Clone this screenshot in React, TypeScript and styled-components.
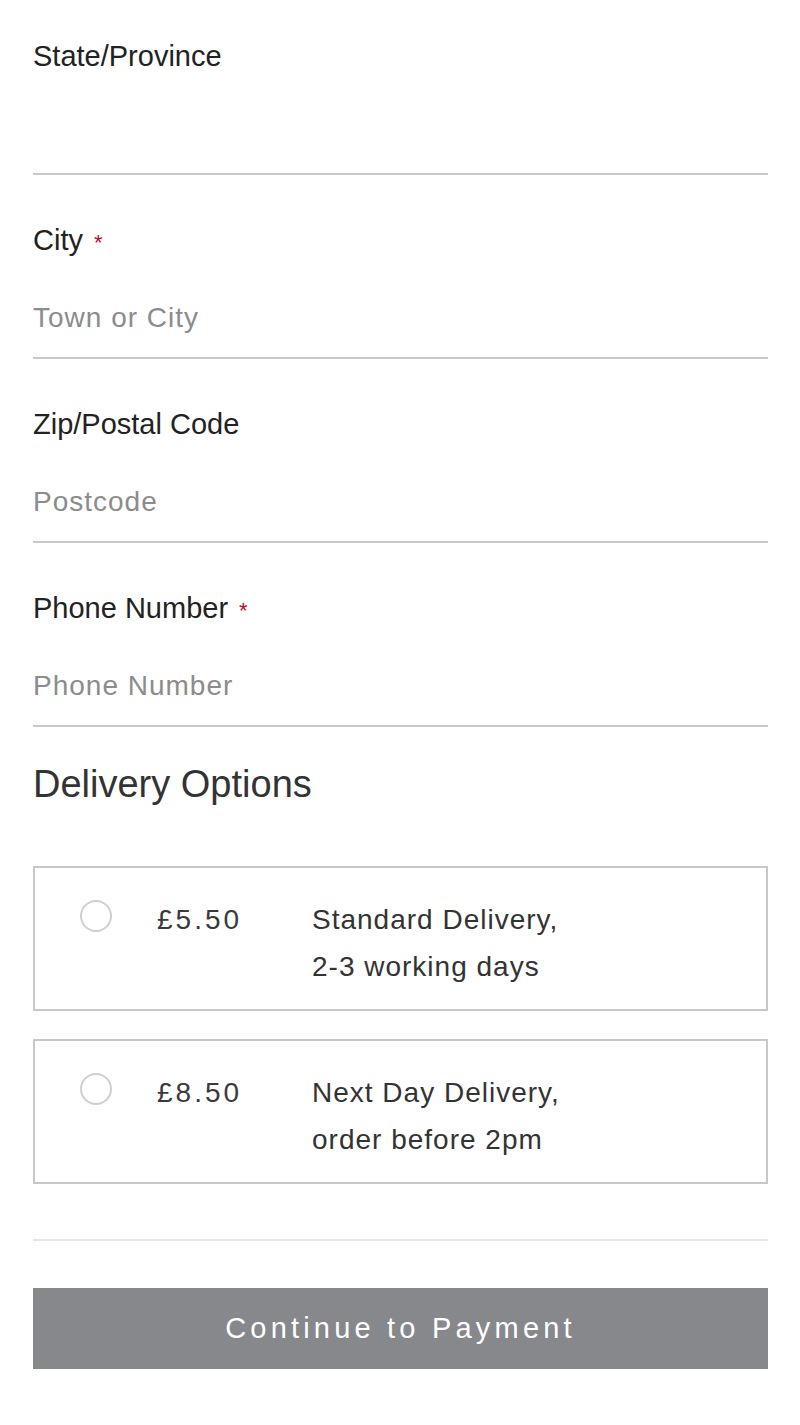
import styled, { createGlobalStyle } from 'styled-components'

const GlobalStyle = createGlobalStyle`
  html, body {
    margin: 0;
    padding: 0;
    background: #fff;
  }
  body {
    font-family: 'Liberation Sans', Arial, sans-serif;
    -webkit-font-smoothing: antialiased;
  }
  * {
    box-sizing: border-box;
  }
`

const fields = [
  { id: 'state', label: 'State/Province', placeholder: '', required: false },
  { id: 'city', label: 'City', placeholder: 'Town or City', required: true },
  { id: 'zip', label: 'Zip/Postal Code', placeholder: 'Postcode', required: false },
  { id: 'phone', label: 'Phone Number', placeholder: 'Phone Number', required: true },
]

const options = [
  { id: 'standard', price: '£5.50', lines: ['Standard Delivery,', '2-3 working days'] },
  { id: 'nextday', price: '£8.50', lines: ['Next Day Delivery,', 'order before 2pm'] },
]

export default function App() {
  return (
    <Page>
      <GlobalStyle />
      <Form>
        {fields.map((f) => (
          <Field key={f.id}>
            <Label htmlFor={f.id}>
              {f.label}
              {f.required && <Required>*</Required>}
            </Label>
            <Input id={f.id} placeholder={f.placeholder} />
          </Field>
        ))}
      </Form>

      <Heading>Delivery Options</Heading>

      <Options>
        {options.map((o) => (
          <Option key={o.id}>
            <Radio type="radio" name="delivery" value={o.id} />
            <Price>{o.price}</Price>
            <Description>
              {o.lines.map((l) => (
                <div key={l}>{l}</div>
              ))}
            </Description>
          </Option>
        ))}
      </Options>

      <Divider />

      <ContinueButton type="button">Continue to Payment</ContinueButton>
    </Page>
  )
}

const Page = styled.div`
  width: 800px;
  min-height: 1425px;
  padding: 40px 32px 0 33px;
`

const Form = styled.div`
  display: flex;
  flex-direction: column;
  gap: 49px;
`

const Field = styled.div`
  display: flex;
  flex-direction: column;
`

const Label = styled.label`
  display: block;
  height: 32px;
  font-size: 29px;
  line-height: 32px;
  color: #222;
  margin-bottom: 30px;
`

const Required = styled.span`
  color: #d0021b;
  font-size: 22px;
  line-height: 0;
  margin-left: 11px;
`

const Input = styled.input`
  display: block;
  width: 100%;
  height: 73px;
  padding: 0 0 7px 0;
  border: none;
  border-bottom: 2px solid #c8c8c8;
  outline: none;
  background: transparent;
  font-family: 'Liberation Sans', Arial, sans-serif;
  font-size: 28px;
  letter-spacing: 1px;
  color: #333;
  &::placeholder {
    color: #8c8c8c;
  }
`

const Heading = styled.h2`
  margin: 35px 0 0 0;
  font-size: 38px;
  line-height: 44px;
  font-weight: 400;
  color: #333;
`

const Options = styled.div`
  display: flex;
  flex-direction: column;
  gap: 28px;
  margin-top: 60px;
`

const Option = styled.label`
  display: grid;
  grid-template-columns: 32px 110px 1fr;
  column-gap: 45px;
  align-items: start;
  height: 145px;
  padding: 28px 20px 19px 45px;
  border: 2px solid #c8c8c8;
  cursor: pointer;
`

const Radio = styled.input`
  appearance: none;
  margin: 4px 0 0 0;
  width: 32px;
  height: 32px;
  border: 2px solid #cfcfcf;
  border-radius: 50%;
  background: #fff;
  &:checked {
    border-color: #555;
    box-shadow: inset 0 0 0 7px #fff;
    background: #555;
  }
`

const Price = styled.div`
  font-size: 28px;
  line-height: 47px;
  letter-spacing: 3px;
  color: #3a3a3a;
`

const Description = styled.div`
  font-size: 28px;
  line-height: 47px;
  letter-spacing: 1px;
  color: #333;
`

const Divider = styled.hr`
  margin: 55px 0 0 0;
  border: none;
  border-top: 2px solid #e6e6e6;
  height: 0;
`

const ContinueButton = styled.button`
  display: block;
  width: 100%;
  height: 81px;
  margin-top: 47px;
  border: none;
  background: #87888c;
  color: #fff;
  font-family: 'Liberation Sans', Arial, sans-serif;
  font-size: 29px;
  letter-spacing: 4.2px;
  cursor: pointer;
`
